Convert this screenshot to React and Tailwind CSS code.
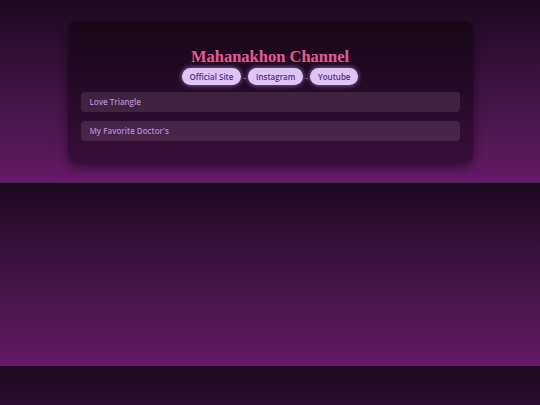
import React from 'react';

const links = ['Official Site', 'Instagram', 'Youtube'];
const shows = ['Love Triangle', "My Favorite Doctor's"];

const App = () => {
  return (
    <div className="min-h-screen bg-linear-to-b from-[#1d0b21] to-[#661a68] bg-[length:100%_183px] bg-repeat-y py-[21px] font-['Open_Sans',sans-serif]">
      <div className="mx-auto w-3/4 rounded-lg bg-black/40 px-[13px] pt-[26px] pb-[22px] shadow-[0_4px_12px_rgba(0,0,0,0.5)]">
        <h1 className="text-center font-['Liberation_Serif',serif] text-[16.5px] font-bold leading-[20px] text-[#e85a92]">
          Mahanakhon Channel
        </h1>
        <div className="mt-[1px] flex items-center justify-center gap-[2px]">
          {links.map((name, i) => (
            <React.Fragment key={name}>
              {i > 0 && <span className="text-[8px] text-[#d9c6f0]">-</span>}
              <a
                href="#"
                className="flex h-[17px] items-center rounded-full bg-[#dcc6f6] px-[8px] text-[8px] font-semibold text-[#5b2a78] shadow-[0_0_5px_rgba(210,170,255,0.7)]"
              >
                {name}
              </a>
            </React.Fragment>
          ))}
        </div>
        <div className="mt-[7px] flex flex-col gap-[9px]">
          {shows.map((title) => (
            <div
              key={title}
              className="flex h-[20px] items-center rounded-[4px] bg-white/10 px-[9px] text-[8px] font-semibold text-[#bd86dc]"
            >
              {title}
            </div>
          ))}
        </div>
      </div>
    </div>
  );
};

export default App;
